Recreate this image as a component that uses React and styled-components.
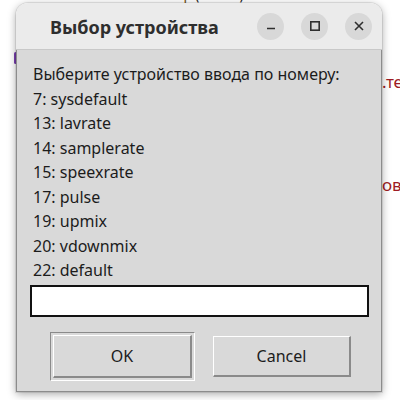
import React from "react";
import styled, { createGlobalStyle } from "styled-components";

const GlobalStyle = createGlobalStyle`
  html, body {
    margin: 0;
    padding: 0;
    background: #ffffff;
    overflow: hidden;
  }
`;

const devices = [
  "7: sysdefault",
  "13: lavrate",
  "14: samplerate",
  "15: speexrate",
  "17: pulse",
  "19: upmix",
  "20: vdownmix",
  "22: default",
];

export default function App() {
  return (
    <>
      <GlobalStyle />
      <Page>
        {/* editor text peeking out behind the dialog */}
        <CodeLine>
          <Ident>time</Ident>.<Fn>sleep</Fn>(<Num>0.05</Num>)
        </CodeLine>
        <Caret />
        <StringBit top={70}>.те</StringBit>
        <StringBit top={173}>ов</StringBit>

        <Window>
          <TitleBar>
            <Title>Выбор устройства</Title>
            <Controls>
              <RoundButton aria-label="minimize">
                <svg width="12" height="12" viewBox="0 0 12 12">
                  <path d="M2 8.5h8" stroke="#2e2e2e" strokeWidth="1.6" />
                </svg>
              </RoundButton>
              <RoundButton aria-label="maximize">
                <svg width="12" height="12" viewBox="0 0 12 12">
                  <rect x="1.8" y="1.8" width="8.4" height="8.4" fill="none" stroke="#2e2e2e" strokeWidth="1.6" />
                </svg>
              </RoundButton>
              <RoundButton aria-label="close">
                <svg width="12" height="12" viewBox="0 0 12 12">
                  <path d="M2 2l8 8M10 2l-8 8" stroke="#2e2e2e" strokeWidth="1.6" />
                </svg>
              </RoundButton>
            </Controls>
          </TitleBar>

          <Body>
            <Line>Выберите устройство ввода по номеру:</Line>
            {devices.map((d) => (
              <Line key={d}>{d}</Line>
            ))}
            <Entry />
            <ButtonRow>
              <DefaultRing>
                <DialogButton>OK</DialogButton>
              </DefaultRing>
              <DialogButton wide>Cancel</DialogButton>
            </ButtonRow>
          </Body>
        </Window>
      </Page>
    </>
  );
}

const Page = styled.div`
  position: relative;
  width: 400px;
  height: 400px;
  padding: 3px 18px 0 16px;
  box-sizing: border-box;
  font-family: "Noto Sans", "Open Sans", sans-serif;
`;

const CodeLine = styled.div`
  position: absolute;
  top: -14px;
  left: 102px;
  font-family: "DejaVu Sans Mono", monospace;
  font-size: 15px;
  color: #1f1f1f;
`;

const Ident = styled.span`
  color: #267f99;
`;

const Fn = styled.span`
  color: #795e26;
`;

const Num = styled.span`
  color: #098658;
`;

const Caret = styled.div`
  position: absolute;
  left: 14px;
  top: 52px;
  width: 3px;
  height: 12px;
  border-radius: 2px;
  background: #7a3fb0;
`;

const StringBit = styled.div`
  position: absolute;
  left: 382px;
  top: ${(p) => p.top}px;
  font-size: 17px;
  color: #9e1c24;
`;

const Window = styled.div`
  position: relative;
  width: 366px;
  height: 389px;
  display: flex;
  flex-direction: column;
  border-radius: 12px 12px 0 0;
  box-shadow: 0 2px 8px rgba(0, 0, 0, 0.35), 0 0 0 1px rgba(0, 0, 0, 0.08);
  overflow: hidden;
`;

const TitleBar = styled.div`
  height: 47px;
  flex-shrink: 0;
  display: flex;
  align-items: center;
  justify-content: space-between;
  padding: 0 10px 0 34px;
  background: #ebebeb;
  border-bottom: 1px solid #c8c8c8;
  box-sizing: border-box;
`;

const Title = styled.div`
  font-size: 18px;
  font-weight: 700;
  color: #2e2e2e;
  padding-top: 1px;
`;

const Controls = styled.div`
  display: flex;
  gap: 17px;
`;

const RoundButton = styled.div`
  width: 27px;
  height: 27px;
  border-radius: 50%;
  background: #d8d8d8;
  display: flex;
  align-items: center;
  justify-content: center;
`;

const Body = styled.div`
  flex: 1;
  display: flex;
  flex-direction: column;
  background: #d9d9d9;
  border: 1px solid #8c8c8c;
  border-top: none;
  padding: 12px 12px 0 13px;
`;

const Line = styled.div`
  height: 24.5px;
  line-height: 24.5px;
  padding-left: 3px;
  font-size: 16px;
  color: #1c1c1c;
  white-space: nowrap;
`;

const Entry = styled.div`
  height: 32px;
  margin-top: 2px;
  background: #ffffff;
  border: 2px solid #111111;
  box-sizing: border-box;
`;

const ButtonRow = styled.div`
  display: flex;
  align-items: center;
  justify-content: space-between;
  margin-top: 15px;
  padding: 0 18px 0 20px;
`;

const DefaultRing = styled.div`
  padding: 2px;
  border-top: 1px solid #8a8a8a;
  border-left: 1px solid #8a8a8a;
  border-bottom: 1px solid #ffffff;
  border-right: 1px solid #ffffff;
`;

const DialogButton = styled.div`
  width: ${(p) => (p.wide ? 138 : 139)}px;
  height: ${(p) => (p.wide ? 41 : 43)}px;
  display: flex;
  align-items: center;
  justify-content: center;
  box-sizing: border-box;
  background: #d9d9d9;
  border-top: 1px solid #ffffff;
  border-left: 1px solid #ffffff;
  border-bottom: 2px solid #8a8a8a;
  border-right: 2px solid #8a8a8a;
  font-size: 16px;
  color: #1c1c1c;
`;
